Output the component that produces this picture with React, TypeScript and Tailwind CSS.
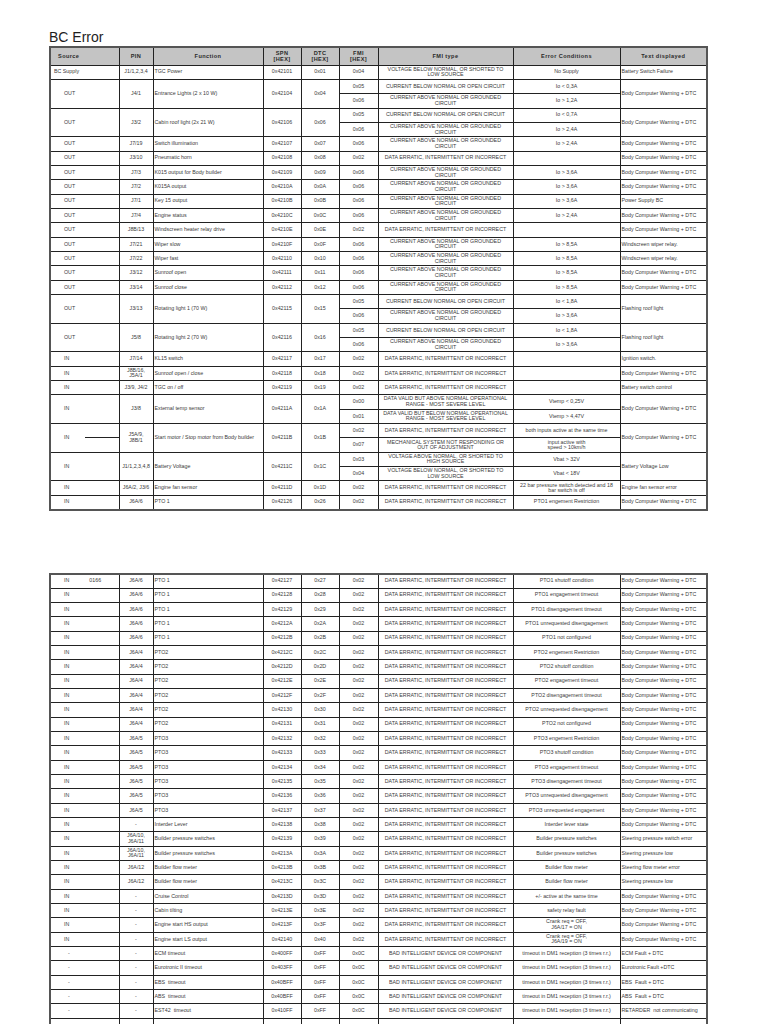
type Sub = { fmi: string; type: string; cond: string };
type Row = {
  src: string;
  pin: string;
  fn: string;
  spn: string;
  dtc: string;
  subs: Sub[];
  text: string;
  note?: string;
  line?: boolean;
};

const DE = "DATA ERRATIC, INTERMITTENT OR INCORRECT";
const CA = "CURRENT ABOVE NORMAL OR GROUNDED\nCIRCUIT";
const CB = "CURRENT BELOW NORMAL OR OPEN CIRCUIT";
const BAD = "BAD INTELLIGENT DEVICE OR COMPONENT";
const BCW = "Body Computer Warning + DTC";
const TO = "timeout in DM1 reception (3 times r.r.)";

const s = (fmi: string, type: string, cond: string): Sub => ({ fmi, type, cond });

const topRows: Row[] = [
  { src: "BC Supply", pin: "J1/1,2,3,4", fn: "TGC Power", spn: "0x42101", dtc: "0x01", subs: [s("0x04", "VOLTAGE BELOW NORMAL, OR SHORTED TO\nLOW SOURCE", "No Supply")], text: "Battery Switch Failure" },
  { src: "OUT", pin: "J4/1", fn: "Entrance Lights (2 x 10 W)", spn: "0x42104", dtc: "0x04", subs: [s("0x05", CB, "Io < 0,3A"), s("0x06", CA, "Io > 1,2A")], text: BCW },
  { src: "OUT", pin: "J3/2", fn: "Cabin roof light (2x 21 W)", spn: "0x42106", dtc: "0x06", subs: [s("0x05", CB, "Io < 0,7A"), s("0x06", CA, "Io > 2,4A")], text: BCW },
  { src: "OUT", pin: "J7/19", fn: "Switch illumination", spn: "0x42107", dtc: "0x07", subs: [s("0x06", CA, "Io > 2,4A")], text: BCW },
  { src: "OUT", pin: "J3/10", fn: "Pneumatic horn", spn: "0x42108", dtc: "0x08", subs: [s("0x02", DE, "")], text: BCW },
  { src: "OUT", pin: "J7/3", fn: "K015 output for Body builder", spn: "0x42109", dtc: "0x09", subs: [s("0x06", CA, "Io > 3,6A")], text: BCW },
  { src: "OUT", pin: "J7/2", fn: "K015A output", spn: "0x4210A", dtc: "0x0A", subs: [s("0x06", CA, "Io > 3,6A")], text: BCW },
  { src: "OUT", pin: "J7/1", fn: "Key 15 output", spn: "0x4210B", dtc: "0x0B", subs: [s("0x06", CA, "Io > 3,6A")], text: "Power Supply BC" },
  { src: "OUT", pin: "J7/4", fn: "Engine status", spn: "0x4210C", dtc: "0x0C", subs: [s("0x06", CA, "Io > 2,4A")], text: BCW },
  { src: "OUT", pin: "J8B/13", fn: "Windscreen heater relay drive", spn: "0x4210E", dtc: "0x0E", subs: [s("0x02", DE, "")], text: BCW },
  { src: "OUT", pin: "J7/21", fn: "Wiper slow", spn: "0x4210F", dtc: "0x0F", subs: [s("0x06", CA, "Io > 8,5A")], text: "Windscreen wiper relay." },
  { src: "OUT", pin: "J7/22", fn: "Wiper fast", spn: "0x42110", dtc: "0x10", subs: [s("0x06", CA, "Io > 8,5A")], text: "Windscreen wiper relay." },
  { src: "OUT", pin: "J3/12", fn: "Sunroof open", spn: "0x42111", dtc: "0x11", subs: [s("0x06", CA, "Io > 8,5A")], text: BCW },
  { src: "OUT", pin: "J3/14", fn: "Sunroof close", spn: "0x42112", dtc: "0x12", subs: [s("0x06", CA, "Io > 8,5A")], text: BCW },
  { src: "OUT", pin: "J3/13", fn: "Rotating light 1 (70 W)", spn: "0x42115", dtc: "0x15", subs: [s("0x05", CB, "Io < 1,8A"), s("0x06", CA, "Io > 3,6A")], text: "Flashing roof light" },
  { src: "OUT", pin: "J5/8", fn: "Rotating light 2 (70 W)", spn: "0x42116", dtc: "0x16", subs: [s("0x05", CB, "Io < 1,8A"), s("0x06", CA, "Io > 3,6A")], text: "Flashing roof light" },
  { src: "IN", pin: "J7/14", fn: "KL15 switch", spn: "0x42117", dtc: "0x17", subs: [s("0x02", DE, "")], text: "Ignition switch." },
  { src: "IN", pin: "J8B/16,\nJ5A/1", fn: "Sunroof open / close", spn: "0x42118", dtc: "0x18", subs: [s("0x02", DE, "")], text: BCW },
  { src: "IN", pin: "J3/9, J4/2", fn: "TGC on / off", spn: "0x42119", dtc: "0x19", subs: [s("0x02", DE, "")], text: "Battery switch control" },
  { src: "IN", pin: "J3/8", fn: "External temp sensor", spn: "0x4211A", dtc: "0x1A", subs: [s("0x00", "DATA VALID BUT ABOVE NORMAL OPERATIONAL\nRANGE - MOST SEVERE LEVEL", "Vtemp < 0,25V"), s("0x01", "DATA VALID BUT BELOW NORMAL OPERATIONAL\nRANGE - MOST SEVERE LEVEL", "Vtemp > 4,47V")], text: BCW },
  { src: "IN", pin: "J5A/9,\nJ8B/1", fn: "Start motor / Stop motor from Body builder", spn: "0x4211B", dtc: "0x1B", line: true, subs: [s("0x02", DE, "both inputs active at the same time"), s("0x07", "MECHANICAL SYSTEM NOT RESPONDING OR\nOUT OF ADJUSTMENT", "input active with\nspeed > 10km/h")], text: BCW },
  { src: "IN", pin: "J1/1,2,3,4,8", fn: "Battery Voltage", spn: "0x4211C", dtc: "0x1C", subs: [s("0x03", "VOLTAGE ABOVE NORMAL, OR SHORTED TO\nHIGH SOURCE", "Vbat > 32V"), s("0x04", "VOLTAGE BELOW NORMAL, OR SHORTED TO\nLOW SOURCE", "Vbat < 18V")], text: "Battery Voltage Low" },
  { src: "IN", pin: "J6A/2, J3/6", fn: "Engine fan sensor", spn: "0x4211D", dtc: "0x1D", subs: [s("0x02", DE, "22 bar pressure switch detected and 18\nbar switch is off")], text: "Engine fan sensor error" },
  { src: "IN", pin: "J6A/6", fn: "PTO 1", spn: "0x42126", dtc: "0x26", subs: [s("0x02", DE, "PTO1 engement Restriction")], text: BCW },
];

const pto = (pin: string, fn: string, spn: string, dtc: string, cond: string, text = BCW, note?: string): Row => ({
  src: "IN",
  pin,
  fn,
  spn,
  dtc,
  subs: [s("0x02", DE, cond)],
  text,
  note,
});

const tmo = (fn: string, spn: string, text: string): Row => ({
  src: "-",
  pin: "-",
  fn,
  spn,
  dtc: "0xFF",
  subs: [s("0x0C", BAD, TO)],
  text,
});

const bottomRows: Row[] = [
  pto("J6A/6", "PTO 1", "0x42127", "0x27", "PTO1 shutoff condition", BCW, "0166"),
  pto("J6A/6", "PTO 1", "0x42128", "0x28", "PTO1 engagement timeout"),
  pto("J6A/6", "PTO 1", "0x42129", "0x29", "PTO1 disengagement timeout"),
  pto("J6A/6", "PTO 1", "0x4212A", "0x2A", "PTO1 unrequested disengagement"),
  pto("J6A/6", "PTO 1", "0x4212B", "0x2B", "PTO1 not configured"),
  pto("J6A/4", "PTO2", "0x4212C", "0x2C", "PTO2 engement Restriction"),
  pto("J6A/4", "PTO2", "0x4212D", "0x2D", "PTO2 shutoff condition"),
  pto("J6A/4", "PTO2", "0x4212E", "0x2E", "PTO2 engagement timeout"),
  pto("J6A/4", "PTO2", "0x4212F", "0x2F", "PTO2 disengagement timeout"),
  pto("J6A/4", "PTO2", "0x42130", "0x30", "PTO2 unrequested disengagement"),
  pto("J6A/4", "PTO2", "0x42131", "0x31", "PTO2 not configured"),
  pto("J6A/5", "PTO3", "0x42132", "0x32", "PTO3 engement Restriction"),
  pto("J6A/5", "PTO3", "0x42133", "0x33", "PTO3 shutoff condition"),
  pto("J6A/5", "PTO3", "0x42134", "0x34", "PTO3 engagement timeout"),
  pto("J6A/5", "PTO3", "0x42135", "0x35", "PTO3 disengagement timeout"),
  pto("J6A/5", "PTO3", "0x42136", "0x36", "PTO3 unrequested disengagement"),
  pto("J6A/5", "PTO3", "0x42137", "0x37", "PTO3 unrequested engagement"),
  pto("-", "Interder Lever", "0x42138", "0x38", "Interder lever state"),
  pto("J6A/10,\nJ6A/11", "Builder pressure switches", "0x42139", "0x39", "Builder pressure switches", "Steering pressure switch error"),
  pto("J6A/10,\nJ6A/11", "Builder pressure switches", "0x4213A", "0x3A", "Builder pressure switches", "Steering pressure low"),
  pto("J6A/12", "Builder flow meter", "0x4213B", "0x3B", "Builder flow meter", "Steering flow meter error"),
  pto("J6A/12", "Builder flow meter", "0x4213C", "0x3C", "Builder flow meter", "Steering pressure low"),
  pto("-", "Cruise Control", "0x4213D", "0x3D", "+/- active at the same time"),
  pto("-", "Cabin tilting", "0x4213E", "0x3E", "safety relay fault"),
  pto("-", "Engine start HS output", "0x4213F", "0x3F", "Crank req = OFF,\nJ6A/17 = ON"),
  pto("-", "Engine start LS output", "0x42140", "0x40", "Crank req = OFF,\nJ6A/19 = ON"),
  tmo("ECM timeout", "0x400FF", "ECM Fault + DTC"),
  tmo("Eurotronic II timeout", "0x403FF", "Eurotronic Fault +DTC"),
  tmo("EBS  timeout", "0x40BFF", "EBS  Fault + DTC"),
  tmo("ABS  timeout", "0x40BFF", "ABS  Fault + DTC"),
  tmo("EST42  timeout", "0x410FF", "RETARDER  not communicating"),
];

const cell = "border border-[#222] p-0 align-middle overflow-hidden whitespace-pre leading-[5.6px]";
const rowH = "h-[14.35px]";

function Cols() {
  return (
    <colgroup>
      <col className="w-[69px]" />
      <col className="w-[34px]" />
      <col className="w-[110px]" />
      <col className="w-[38px]" />
      <col className="w-[38px]" />
      <col className="w-[39px]" />
      <col className="w-[135px]" />
      <col className="w-[107px]" />
      <col className="w-[87px]" />
    </colgroup>
  );
}

function SourceCell({ row, span }: { row: Row; span: number }) {
  const pad = row.src === "BC Supply" ? "pl-[3px]" : row.src === "-" ? "pl-[17px]" : "pl-[13px]";
  return (
    <td rowSpan={span} className={`${cell} ${pad}`}>
      <div className="flex items-center">
        <span>{row.src}</span>
        {row.note && <span className="ml-[20px]">{row.note}</span>}
        {row.line && <span className="ml-auto h-px w-[34px] bg-[#222]" />}
      </div>
    </td>
  );
}

function DataRows({ row }: { row: Row }) {
  const span = row.subs.length;
  return (
    <>
      {row.subs.map((sub, i) => (
        <tr key={i} className={rowH}>
          {i === 0 && (
            <>
              <SourceCell row={row} span={span} />
              <td rowSpan={span} className={`${cell} text-center`}>{row.pin}</td>
              <td rowSpan={span} className={`${cell} pl-[1px]`}>{row.fn}</td>
              <td rowSpan={span} className={`${cell} text-center`}>{row.spn}</td>
              <td rowSpan={span} className={`${cell} text-center`}>{row.dtc}</td>
            </>
          )}
          <td className={`${cell} text-center`}>{sub.fmi}</td>
          <td className={`${cell} text-center`}>{sub.type}</td>
          <td className={`${cell} text-center`}>{sub.cond}</td>
          {i === 0 && (
            <td rowSpan={span} className={`${cell} pl-[1px]`}>{row.text}</td>
          )}
        </tr>
      ))}
    </>
  );
}

function Header() {
  const h = "border border-[#222] p-0 align-middle font-bold text-[#2a2a2a] text-[5.6px] leading-[6px] tracking-[0.4px] whitespace-pre";
  return (
    <tr className="h-[18px] bg-[#c4c4c4]">
      <th className={`${h} text-left pl-[7px]`}>Source</th>
      <th className={`${h} text-center`}>PIN</th>
      <th className={`${h} text-center`}>Function</th>
      <th className={`${h} text-center`}>{"SPN\n[HEX]"}</th>
      <th className={`${h} text-center`}>{"DTC\n[HEX]"}</th>
      <th className={`${h} text-center`}>{"FMI\n[HEX]"}</th>
      <th className={`${h} text-center`}>FMI type</th>
      <th className={`${h} text-center`}>Error Conditions</th>
      <th className={`${h} text-center`}>Text displayed</th>
    </tr>
  );
}

export default function App() {
  return (
    <div className="min-h-[1024px] w-[768px] overflow-hidden bg-white font-['Liberation_Sans',Arial,sans-serif] text-[#3a3a3a]">
      <div className="pl-[49px] pt-[28px]">
        <h1 className="h-[18px] text-[14px] leading-[18px] text-[#1e1e1e]">BC Error</h1>
        <table className="table-fixed border-collapse border-2 border-[#555] text-[5.3px] w-[657px]">
          <Cols />
          <tbody>
            <Header />
            {topRows.map((r, i) => (
              <DataRows key={i} row={r} />
            ))}
          </tbody>
        </table>
        <table className="mt-[62px] table-fixed border-collapse border-2 border-[#555] text-[5.3px] w-[657px]">
          <Cols />
          <tbody>
            {bottomRows.map((r, i) => (
              <DataRows key={i} row={r} />
            ))}
            <tr className={rowH}>
              {Array.from({ length: 9 }).map((_, i) => (
                <td key={i} className={cell} />
              ))}
            </tr>
          </tbody>
        </table>
      </div>
    </div>
  );
}
